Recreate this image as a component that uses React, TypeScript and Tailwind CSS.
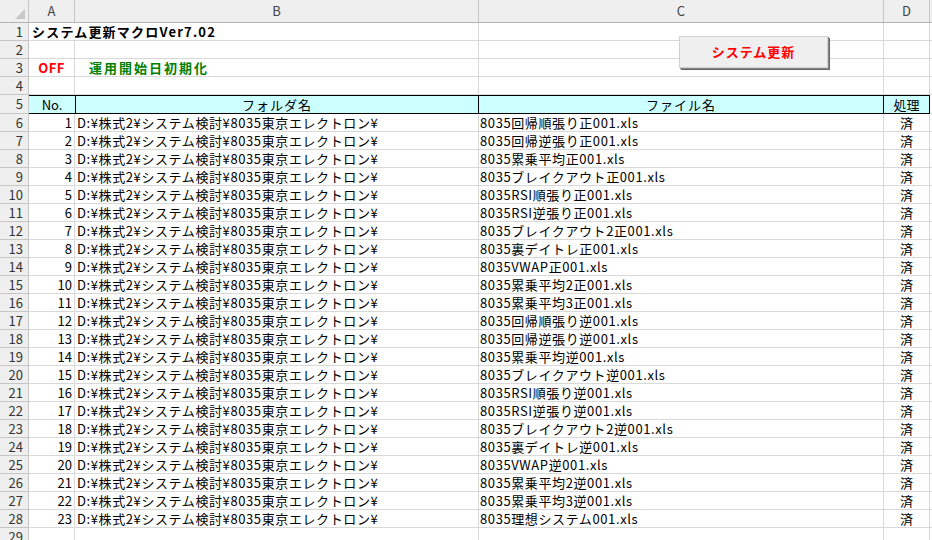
import React from "react";

const files = [
  "8035回帰順張り正001.xls","8035回帰逆張り正001.xls","8035累乗平均正001.xls","8035ブレイクアウト正001.xls",
  "8035RSI順張り正001.xls","8035RSI逆張り正001.xls","8035ブレイクアウト2正001.xls","8035裏デイトレ正001.xls",
  "8035VWAP正001.xls","8035累乗平均2正001.xls","8035累乗平均3正001.xls","8035回帰順張り逆001.xls",
  "8035回帰逆張り逆001.xls","8035累乗平均逆001.xls","8035ブレイクアウト逆001.xls","8035RSI順張り逆001.xls",
  "8035RSI逆張り逆001.xls","8035ブレイクアウト2逆001.xls","8035裏デイトレ逆001.xls","8035VWAP逆001.xls",
  "8035累乗平均2逆001.xls","8035累乗平均3逆001.xls","8035理想システム001.xls",
];
const folder = "D:¥株式2¥システム検討¥8035東京エレクトロン¥";

function Row({ n, a, b, c, d }: any) {
  return (
    <div className="flex h-[18px] text-[13px] leading-[17px]">
      <div className="w-[29px] shrink-0 bg-[#efefef] border-r border-b border-[#c6c6c6] text-[#333] text-right pr-[5px]">{n}</div>
      <div className="w-[46px] shrink-0 border-r border-b border-[#d9d9d9]">{a}</div>
      <div className="w-[404px] shrink-0 border-r border-b border-[#d9d9d9] whitespace-nowrap tracking-[0.6px]">{b}</div>
      <div className="w-[405px] shrink-0 border-r border-b border-[#d9d9d9] whitespace-nowrap tracking-[0.6px]">{c}</div>
      <div className="w-[46px] shrink-0 border-r border-b border-[#d9d9d9] text-center">{d}</div>
      <div className="flex-1 border-b border-[#d9d9d9]"></div>
    </div>
  );
}

export default function App() {
  return (
    <div className="relative w-[932px] h-[540px] overflow-hidden bg-white text-black" style={{ fontFamily: '"Noto Sans CJK JP", sans-serif' }}>
      <div className="flex h-[23px] bg-[#efefef] border-b border-[#b5b5b5] text-[13px] text-[#444] leading-[22px]">
        <div className="w-[29px] shrink-0 border-r border-[#c6c6c6] relative">
          <div className="absolute right-[3px] bottom-[3px] w-0 h-0 border-l-[10px] border-l-transparent border-b-[10px] border-b-[#c8c8c8]"></div>
        </div>
        <div className="w-[46px] shrink-0 border-r border-[#c6c6c6] text-center">A</div>
        <div className="w-[404px] shrink-0 border-r border-[#c6c6c6] text-center">B</div>
        <div className="w-[405px] shrink-0 border-r border-[#c6c6c6] text-center">C</div>
        <div className="w-[46px] shrink-0 border-r border-[#c6c6c6] text-center">D</div>
        <div className="flex-1"></div>
      </div>
      <div className="flex h-[18px] text-[13px] leading-[17px]">
        <div className="w-[29px] shrink-0 bg-[#efefef] border-r border-b border-[#c6c6c6] text-[#333] text-right pr-[5px]">1</div>
        <div className="w-[450px] shrink-0 border-r border-b border-[#d9d9d9] font-bold pl-[3px] whitespace-nowrap tracking-[1.2px]">システム更新マクロVer7.02</div>
        <div className="w-[405px] shrink-0 border-r border-b border-[#d9d9d9]"></div>
        <div className="w-[46px] shrink-0 border-r border-b border-[#d9d9d9]"></div>
        <div className="flex-1 border-b border-[#d9d9d9]"></div>
      </div>
      <Row n="2" />
      <div className="flex h-[18px] text-[13px] leading-[17px]">
        <div className="w-[29px] shrink-0 bg-[#efefef] border-r border-b border-[#c6c6c6] text-[#333] text-right pr-[5px]">3</div>
        <div className="w-[46px] shrink-0 border-r border-b border-[#d9d9d9] text-[#ff0000] font-bold text-center tracking-[0.5px]">OFF</div>
        <div className="w-[404px] shrink-0 border-r border-b border-[#d9d9d9] text-[#008000] font-bold pl-[14px] tracking-[2px]">運用開始日初期化</div>
        <div className="w-[405px] shrink-0 border-r border-b border-[#d9d9d9]"></div>
        <div className="w-[46px] shrink-0 border-r border-b border-[#d9d9d9]"></div>
        <div className="flex-1 border-b border-[#d9d9d9]"></div>
      </div>
      <Row n="4" />
      <div className="flex h-[19px] text-[13px] leading-[17px]">
        <div className="w-[29px] shrink-0 bg-[#efefef] border-r border-b border-[#c6c6c6] text-[#333] text-right pr-[5px]">5</div>
        <div className="w-[46px] shrink-0 bg-[#ccffff] border-t border-b border-black text-center">No.</div>
        <div className="w-[404px] shrink-0 bg-[#ccffff] border border-black text-center tracking-[1px]">フォルダ名</div>
        <div className="w-[405px] shrink-0 bg-[#ccffff] border-t border-b border-r border-black text-center tracking-[1px]">ファイル名</div>
        <div className="w-[46px] shrink-0 bg-[#ccffff] border-t border-b border-r border-black text-center">処理</div>
        <div className="flex-1 border-b border-[#d9d9d9]"></div>
      </div>
      {files.map((f, i) => (
        <Row key={i} n={String(i + 6)} a={<div className="text-right pr-[2px]">{i + 1}</div>} b={<span className="pl-[2px]">{folder}</span>} c={<span className="pl-[1px]">{f}</span>} d="済" />
      ))}
      <Row n="29" />
      <button className="absolute left-[679px] top-[36px] w-[149px] h-[32px] bg-[#efefef] border border-[#d0d0d0] shadow-[1px_1px_0_#888,2px_2px_0_#666] text-[#ff0000] font-bold text-[13px] tracking-[1px]">
        システム更新
      </button>
    </div>
  );
}
